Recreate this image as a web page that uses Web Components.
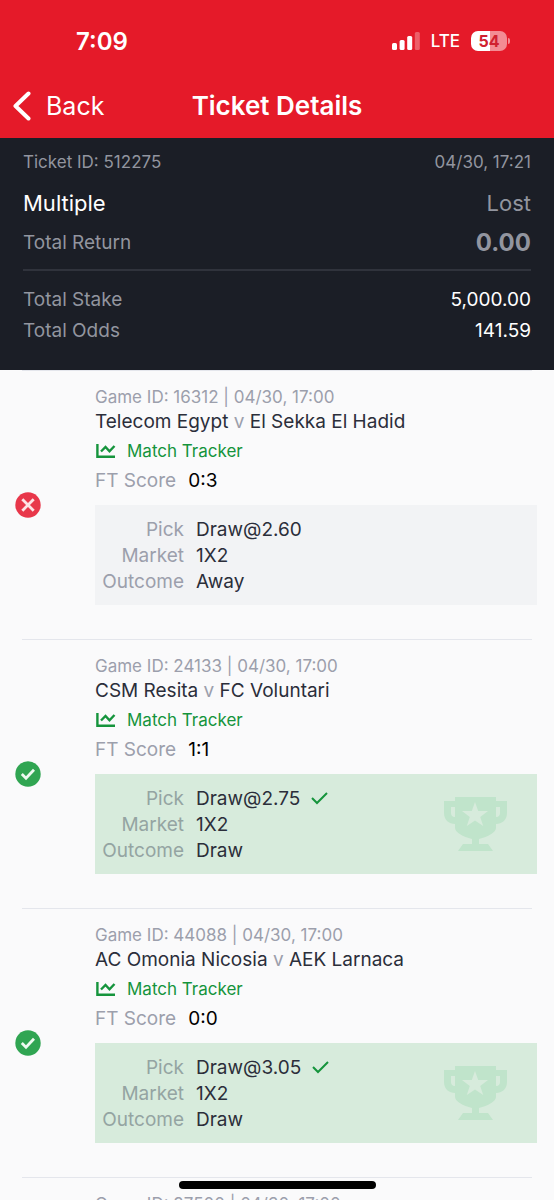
<!DOCTYPE html>
<html lang="en">
<head>
<meta charset="utf-8">
<meta name="viewport" content="width=device-width, initial-scale=1">
<title>Ticket Details</title>
<style>
  html, body { margin: 0; height: 100%; }
  body { background: #fafafb; font-family: Inter, "Liberation Sans", sans-serif; color: #2b2e3a; }
</style>
</head>
<body>
<ticket-app>
  <status-bar slot="top" time="7:09" network="LTE" battery="54"></status-bar>
  <nav-bar slot="top" heading="Ticket Details"></nav-bar>
  <ticket-summary ticket="512275" date="04/30, 17:21" kind="Multiple" result="Lost" total-return="0.00" stake="5,000.00" odds="141.59"></ticket-summary>
  <match-item game="16312" date="04/30, 17:00" home="Telecom Egypt" away="El Sekka El Hadid" score="0:3" pick="Draw@2.60" market="1X2" outcome="Away"></match-item>
  <match-item won game="24133" date="04/30, 17:00" home="CSM Resita" away="FC Voluntari" score="1:1" pick="Draw@2.75" market="1X2" outcome="Draw"></match-item>
  <match-item won game="44088" date="04/30, 17:00" home="AC Omonia Nicosia" away="AEK Larnaca" score="0:0" pick="Draw@3.05" market="1X2" outcome="Draw"></match-item>
  <match-item game="27500" date="04/30, 17:00"></match-item>
</ticket-app>
<script>
const mount = (host, html) => {
  const t = document.createElement('template');
  t.innerHTML = html;
  host.attachShadow({ mode: 'open' }).append(t.content.cloneNode(true));
};

customElements.define('ticket-app', class extends HTMLElement {
  connectedCallback() {
    mount(this, `
      <style>
        :host { display: flex; flex-direction: column; height: 100vh; overflow: hidden; }
        header { background: #e51a29; color: #fff; flex: none; }
        main { flex: 1; min-height: 0; overflow-y: auto; scrollbar-width: none; }
        .home { position: fixed; left: 50%; bottom: 11px; width: 197px; height: 8px; margin-left: -98px; border-radius: 4px; background: #000; }
      </style>
      <header><slot name="top"></slot></header>
      <main><slot></slot></main>
      <div class="home"></div>`);
  }
});

customElements.define('status-bar', class extends HTMLElement {
  connectedCallback() {
    const a = n => this.getAttribute(n);
    mount(this, `
      <style>
        :host { display: flex; justify-content: space-between; align-items: center; height: 50px; padding: 16px 44px 8px 76px; }
        .time { font-size: 24px; font-weight: 600; }
        .right { display: flex; align-items: center; gap: 11px; font-size: 17px; font-weight: 500; }
        svg { display: block; }
        .battery { display: flex; align-items: center; gap: 1px; }
        .cell { display: grid; place-items: center; width: 36px; height: 20px; border-radius: 7px; font-size: 16px; font-weight: 700; color: #d0202f; background: linear-gradient(90deg, #fff 54%, #f38c94 54%); }
        .tip { width: 2px; height: 6px; border-radius: 0 2px 2px 0; background: #f38c94; }
      </style>
      <span class="time">${a('time')}</span>
      <span class="right">
        <svg width="28" height="18" viewBox="0 0 28 18" fill="#fff">
          <rect x="0" y="11" width="5" height="7" rx="1.5"/><rect x="7.6" y="8" width="5" height="10" rx="1.5"/>
          <rect x="15.2" y="4" width="5" height="14" rx="1.5"/><rect x="22.8" y="0" width="5" height="18" rx="1.5" opacity=".3"/>
        </svg>
        <span>${a('network')}</span>
        <span class="battery"><span class="cell">${a('battery')}</span><span class="tip"></span></span>
      </span>`);
  }
});

customElements.define('nav-bar', class extends HTMLElement {
  connectedCallback() {
    mount(this, `
      <style>
        :host { display: grid; grid-template-columns: 1fr auto 1fr; align-items: center; height: 64px; }
        button { all: unset; display: flex; align-items: center; gap: 15px; padding-left: 12px; font-size: 25px; line-height: 32px; cursor: pointer; }
        h1 { margin: 0; font-size: 26px; line-height: 32px; font-weight: 600; }
      </style>
      <button type="button">
        <svg width="19" height="30" viewBox="0 0 19 30" fill="none" stroke="#fff" stroke-width="4" stroke-linecap="round" stroke-linejoin="round"><path d="M16.5 2.5 3.5 15l13 12.5"/></svg>
        <span>Back</span>
      </button>
      <h1>${this.getAttribute('heading')}</h1>`);
  }
});

customElements.define('ticket-summary', class extends HTMLElement {
  connectedCallback() {
    const a = n => this.getAttribute(n);
    mount(this, `
      <style>
        :host { display: block; padding: 9px 23px 24px; background: #1b1e26; color: #92959f; }
        div { display: flex; justify-content: space-between; align-items: center; font-size: 19px; line-height: 31px; }
        .id { font-size: 17px; }
        .kind { font-size: 22px; line-height: 50px; height: 49px; }
        .return { height: 30px; }
        .return b { font-size: 24px; }
        .light { color: #fff; }
        hr { margin: 12px 0 13px; border: 0; height: 2px; background: #30333c; }
      </style>
      <div class="id"><span>Ticket ID: ${a('ticket')}</span><span>${a('date')}</span></div>
      <div class="kind"><span class="light">${a('kind')}</span><span>${a('result')}</span></div>
      <div class="return"><span>Total Return</span><b>${a('total-return')}</b></div>
      <hr>
      <div><span>Total Stake</span><span class="light">${a('stake')}</span></div>
      <div><span>Total Odds</span><span class="light">${a('odds')}</span></div>`);
  }
});

customElements.define('result-badge', class extends HTMLElement {
  connectedCallback() {
    const won = this.hasAttribute('won');
    mount(this, `
      <style>:host { display: block; } svg { display: block; }</style>
      <svg width="26" height="26" viewBox="0 0 26 26" fill="none" role="img" aria-label="${won ? 'Won' : 'Lost'}">
        <circle cx="13" cy="13" r="12.7" fill="${won ? '#30a552' : '#e8374a'}"/>
        ${won ? '<path d="m6.8 13 4.2 4.2 8-8.4" stroke="#eefaf1" stroke-width="2.8"/>'
              : '<path d="m7.3 7.3 11.4 11.4M18.7 7.3 7.3 18.7" stroke="#fde3e6" stroke-width="2.8"/>'}
      </svg>`);
  }
});

customElements.define('pick-box', class extends HTMLElement {
  connectedCallback() {
    const a = n => this.getAttribute(n), won = this.hasAttribute('won');
    mount(this, `
      <style>
        :host { display: flex; align-items: center; justify-content: space-between; box-sizing: border-box; height: 100px; padding: 2px 30px 0 6px; background: #f2f3f5; }
        :host([won]) { background: #d7ebdc; }
        dl { display: grid; grid-template-columns: 83px auto; column-gap: 12px; margin: 0; font-size: 19px; line-height: 26px; }
        dt { text-align: right; color: #9c9fac; }
        :host([won]) dt { color: #94a4a2; }
        dd { margin: 0; display: flex; align-items: center; gap: 11px; }
        svg { display: block; }
      </style>
      <dl>
        <dt>Pick</dt><dd>${a('pick')}${won ? '<svg width="17" height="16" viewBox="0 0 17 16" fill="none" stroke="#15943c" stroke-width="2"><path d="m1 7 5 5L16 2"/></svg>' : ''}</dd>
        <dt>Market</dt><dd>${a('market')}</dd>
        <dt>Outcome</dt><dd>${a('outcome')}</dd>
      </dl>
      ${won ? `<svg width="63" height="56" viewBox="0 0 63 56" fill="#c0e4cb">
        <path fill-rule="evenodd" d="M11 0h41v4h11v12c0 7-5 11-11 11v4c0 4-8 9-17 11v5h9l5 7H14l5-7h9v-5C19 40 11 35 11 31v-4C5 27 0 23 0 16V4h11zM7 10v6c0 2 1 4 4 4V10zM52 10v10c3 0 4-2 4-4v-6z"/>
        <path fill="#d7ebdc" d="m31 5 3.2 9H44l-7.8 6 3 9-8.2-5.500-8.200 5.500 3-9-7.800-6h9.800z"/>
      </svg>` : ''}`);
  }
});

customElements.define('match-item', class extends HTMLElement {
  connectedCallback() {
    const a = n => this.getAttribute(n) || '', won = this.hasAttribute('won') ? 'won' : '';
    const full = this.hasAttribute('home');
    mount(this, `
      <style>
        :host { display: block; }
        hr { margin: 0 22px; border: 0; height: 1px; background: #e4e6ec; }
        article { display: grid; grid-template-columns: 80px minmax(0, 1fr); align-items: center; padding: 0 17px 0 15px; }
        .body { padding: 15px 0 34px; }
        .meta { font-size: 17px; line-height: 22px; color: #9c9fac; }
        h2 { margin: 0; font-size: 19px; line-height: 28px; font-weight: 400; }
        h2 i { font-style: normal; color: #9c9fac; }
        a { display: flex; align-items: center; gap: 11px; font-size: 17px; line-height: 30px; color: #15943c; text-decoration: none; }
        .score { display: flex; gap: 12px; margin-bottom: 9px; font-size: 19px; line-height: 30px; color: #9c9fac; }
        .score span { color: #000; }
      </style>
      <hr>
      <article>
        ${full ? `<result-badge ${won}></result-badge>` : '<span></span>'}
        <div class="body">
          <div class="meta">Game ID: ${a('game')} | ${a('date')}</div>
          ${full ? `
          <h2>${a('home')} <i>v</i> ${a('away')}</h2>
          <a href="#tracker"><svg width="21" height="16" viewBox="0 0 21 16" fill="none" stroke="#15943c" stroke-width="2.4"><path d="M2.400 1v12.800H20M6 8.500 10.500 4l4 4.300L19.500 3"/></svg>Match Tracker</a>
          <div class="score">FT Score <span>${a('score')}</span></div>
          <pick-box ${won} pick="${a('pick')}" market="${a('market')}" outcome="${a('outcome')}"></pick-box>` : ''}
        </div>
      </article>`);
  }
});
</script>
</body>
</html>
